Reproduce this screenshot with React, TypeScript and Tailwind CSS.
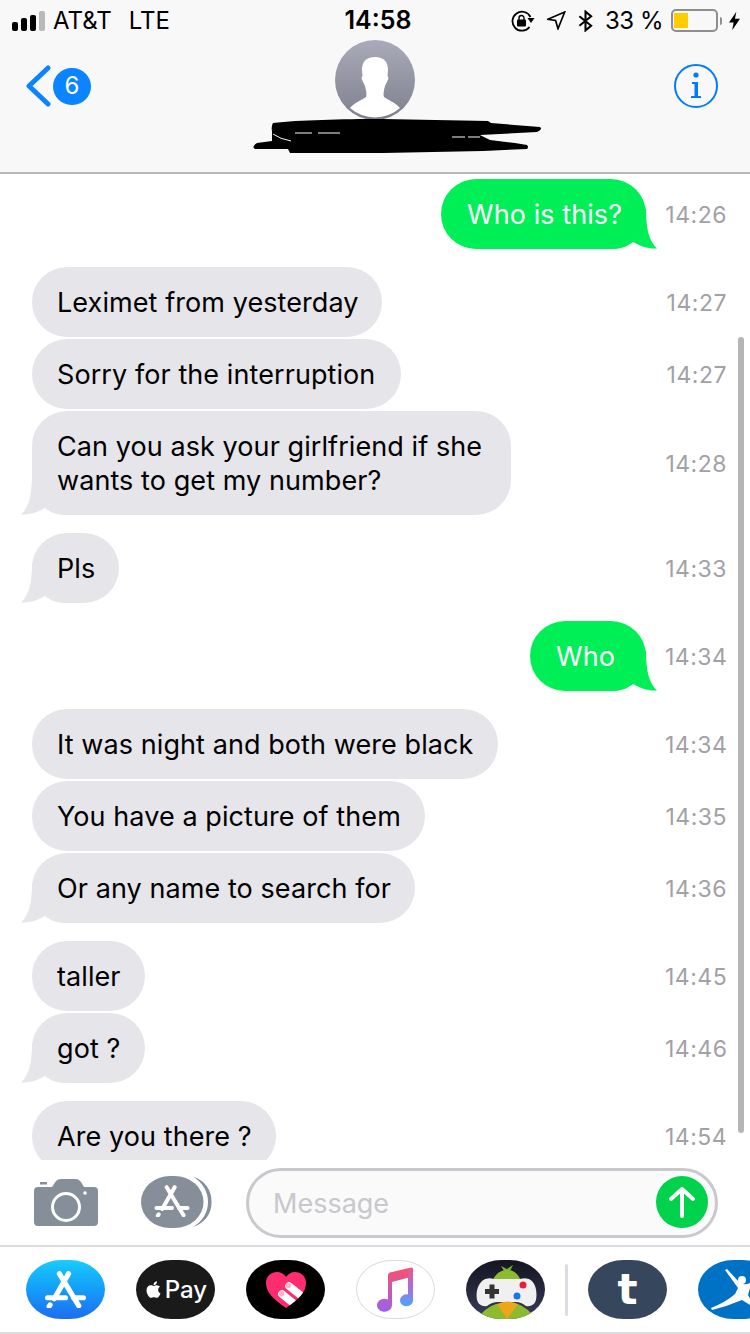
import type { ReactNode } from "react";
import { FaApple } from "react-icons/fa";

type Message = {
    text: string[];
    time: string;
    widthClass: string;
    outgoing?: boolean;
    tail?: boolean;
    gapBelow?: boolean;
};

const messages: Message[] = [
    { text: ["Who is this?"], time: "14:26", outgoing: true, tail: true, gapBelow: true, widthClass: "w-[205px]" },
    { text: ["Leximet from yesterday"], time: "14:27", widthClass: "w-[350px]" },
    { text: ["Sorry for the interruption"], time: "14:27", widthClass: "w-[369px]" },
    { text: ["Can you ask your girlfriend if she", "wants to get my number?"], time: "14:28", tail: true, gapBelow: true, widthClass: "w-[479px]" },
    { text: ["Pls"], time: "14:33", tail: true, gapBelow: true, widthClass: "w-[87px]" },
    { text: ["Who"], time: "14:34", outgoing: true, tail: true, gapBelow: true, widthClass: "w-[116px]" },
    { text: ["It was night and both were black"], time: "14:34", widthClass: "w-[466px]" },
    { text: ["You have a picture of them"], time: "14:35", widthClass: "w-[393px]" },
    { text: ["Or any name to search for"], time: "14:36", tail: true, gapBelow: true, widthClass: "w-[383px]" },
    { text: ["taller"], time: "14:45", widthClass: "w-[113px]" },
    { text: ["got ?"], time: "14:46", tail: true, gapBelow: true, widthClass: "w-[113px]" },
    { text: ["Are you there ?"], time: "14:54", widthClass: "w-[244px]" },
];

function AppStoreGlyph({ width, height, x, y, stroke = 4.5 }: { width: number; height: number; x?: number; y?: number; stroke?: number }) {
    return (
        <svg x={x} y={y} width={width} height={height} viewBox="0 0 40 36" fill="none" stroke="white" strokeWidth={stroke} strokeLinecap="round">
            <path d="M23 2.5 L9 27" />
            <path d="M5 33 L4 34.5" />
            <path d="M14 2.5 L33 34" />
            <path d="M2.5 26 H20 M28 26 H37.5" />
        </svg>
    );
}

function StatusBar() {
    return (
        <div className="flex h-[40px] items-center justify-between pl-[12px] pr-[10px] pt-[1px] text-[24px] text-black">
            <div className="flex w-[255px] items-center">
                <div className="flex items-end gap-[3px]">
                    <span className="h-[9px] w-[6px] rounded-[2px] bg-black" />
                    <span className="h-[13px] w-[6px] rounded-[2px] bg-black" />
                    <span className="h-[16px] w-[6px] rounded-[2px] bg-black" />
                    <span className="h-[20px] w-[6px] rounded-[2px] bg-[#b9b9b9]" />
                </div>
                <span className="ml-[8px]">AT&amp;T</span>
                <span className="ml-[17px]">LTE</span>
            </div>
            <span className="text-[25px] font-semibold">14:58</span>
            <div className="flex w-[251px] items-center justify-end">
                <svg width="24" height="22" viewBox="0 0 24 22" fill="none" stroke="black" strokeWidth="1.8">
                    <path d="M18.5 17 A9.5 9.5 0 1 1 19.5 7" />
                    <path d="M16.5 8 H23.5 L20 13 Z" fill="black" stroke="none" />
                    <rect x="6" y="9.5" width="9" height="7" rx="1" fill="black" stroke="none" />
                    <path d="M8 10 V8 a2.5 2.5 0 0 1 5 0 V10" strokeWidth="1.4" />
                </svg>
                <svg className="ml-[12px]" width="19" height="19" viewBox="0 0 19 19" fill="none" stroke="black" strokeWidth="1.7" strokeLinejoin="miter">
                    <path d="M17.7 1 L0.8 8.3 L8.6 9.5 L11 17.7 Z" />
                </svg>
                <svg className="ml-[12px]" width="15" height="22" viewBox="0 0 16 22" fill="none" stroke="black" strokeWidth="2.2">
                    <path d="M1.5 6 L14 16 L8 21 V1 L14 6 L1.5 16" />
                </svg>
                <span className="ml-[12px] tracking-[-0.5px]">33 %</span>
                <div className="ml-[8px] flex h-[23px] w-[47px] items-center rounded-[5px] border-2 border-[#8e8e8e] pl-[1px]">
                    <span className="h-[15px] w-[14px] bg-[#ffcc00]" />
                </div>
                <span className="ml-[2px] h-[8px] w-[2px] rounded-r-full bg-[#8e8e8e]" />
                <svg className="ml-[7px]" width="11" height="20" viewBox="0 0 12 20" fill="black">
                    <path d="M8 0 L0 11.5 H5 L3.5 20 L12 7.5 H6.5 Z" />
                </svg>
            </div>
        </div>
    );
}

function Avatar() {
    return (
        <div className="h-[80px] w-[80px] overflow-hidden rounded-full bg-linear-to-b from-[#a9acb8] to-[#7e818d]">
            <svg width="80" height="80" viewBox="0 0 80 80" fill="white">
                <path d="M40 17 C31 17 27 22 27 30 L27.5 36 L26.5 38 C27 41 29 43 30 46 C31 50 32 54 31 57 C27 60 20 62 15 68 A38 38 0 0 0 65 68 C60 62 53 60 49 57 C48 54 49 50 50 46 C51 43 53 41 53.5 38 L52.5 36 L53 30 C53 22 49 17 40 17 Z" />
            </svg>
        </div>
    );
}

function NavHeader() {
    return (
        <div className="relative flex h-[132px] items-start justify-between pl-[26px] pr-[32px]">
            <div className="mt-[25px] flex items-center">
                <svg width="25" height="42" viewBox="0 0 25 42" fill="none" stroke="#0a84ff" strokeWidth="5" strokeLinecap="round" strokeLinejoin="round">
                    <path d="M22 3 L3 21 L22 39" />
                </svg>
                <span className="ml-[2px] flex h-[37px] w-[38px] items-center justify-center rounded-full bg-[#0a84ff] text-[24px] text-white">6</span>
            </div>
            <div className="absolute left-[335px] top-0">
                <Avatar />
            </div>
            {/* scribbled out contact name */}
            <svg className="absolute left-[250px] top-[78px]" width="295" height="40" viewBox="250 118 295 40" fill="black">
                <path d="M273 123 C300 120 340 119 383 119 L488 121 L491 123 L540 127 Q543 129 537 132 L480 135 L490 140 L515 143 L527 145 Q529 147 527 149 L483 151 L383 153 L290 153 L288 149 L255 149 Q251 147 257 143 L272 141 L272 131 Q271 126 273 123 Z" />
                <path d="M273 134 Q280 139 291 141 M295 133 H312 M318 133 H340 M452 137 H465 M468 137 H480" fill="none" stroke="#f8f8f9" strokeWidth="1" />
            </svg>
            <svg className="mt-[24px]" width="44" height="44" viewBox="0 0 44 44" fill="none">
                <circle cx="22" cy="22" r="21" stroke="#007aff" strokeWidth="2" />
                <circle cx="22" cy="11" r="2.6" fill="#007aff" />
                <path d="M18 18 H24 V32 H27 V34 H17 V32 H20.5 V20 H18 Z" fill="#007aff" />
            </svg>
        </div>
    );
}

function Bubble({ message }: { message: Message }) {
    const color = message.outgoing ? "#00ef57" : "#e5e5ea";
    return (
        <div
            className={`relative rounded-[35px] pb-[17px] pt-[19px] text-[27px] leading-[34px] tracking-[0.08px] ${
                message.outgoing ? "bg-[#00ef57] px-[26px] text-white" : "bg-[#e5e5ea] px-[25px] text-black"
            } ${message.widthClass}`}
        >
            {message.tail && !message.outgoing && (
                <svg className="absolute bottom-0 left-[-11px]" width="44" height="40" viewBox="0 0 44 40" fill={color}>
                    <path d="M11 0 C11 20 8 32 0 39.5 C9 40 17 37 24 33 C28 36 34 40 44 40 L44 0 Z" />
                </svg>
            )}
            {message.tail && message.outgoing && (
                <svg className="absolute bottom-0 right-[-11px]" width="44" height="40" viewBox="0 0 44 40" fill={color}>
                    <path d="M33 0 C33 20 36 32 44 39.5 C35 40 27 37 20 33 C16 36 10 40 0 40 L0 0 Z" />
                </svg>
            )}
            {message.text.map((line) => (
                <div key={line} className="relative whitespace-nowrap">{line}</div>
            ))}
        </div>
    );
}

function MessageRow({ message }: { message: Message }) {
    return (
        <div
            className={
                message.gapBelow
                    ? "mb-[18px] flex items-center justify-between pl-[32px] pr-[23px]"
                    : "mb-[2px] flex items-center justify-between pl-[32px] pr-[23px]"
            }
        >
            {message.outgoing ? <span /> : <Bubble message={message} />}
            <div className="flex items-center">
                {message.outgoing && <Bubble message={message} />}
                <span className="ml-[19px] mt-[2px] w-[62px] whitespace-nowrap text-right text-[23px] tracking-[0.5px] text-[#a1a1a6]">{message.time}</span>
            </div>
        </div>
    );
}

function InputBar() {
    return (
        <div className="relative z-10 flex h-[87px] items-start border-b-2 border-[#dcdce0] bg-white pl-[34px] pt-[8px]">
            <svg className="mt-[10px]" width="64" height="48" viewBox="0 0 64 48">
                <path fillRule="evenodd" fill="#858e99" d="M4 9 H18 L22 3 Q24 1 27 1 H42 Q45 1 47 4 L50 9 H60 Q64 9 64 13 V44 Q64 48 60 48 H4 Q0 48 0 44 V13 Q0 9 4 9 Z M32 14 A15 15 0 1 0 32 44 A15 15 0 1 0 32 14 Z M32 17 A12 12 0 1 1 32 41 A12 12 0 1 1 32 17 Z" />
                <rect x="6" y="4" width="7" height="2.5" fill="#858e99" />
                <circle cx="51" cy="15" r="1.8" fill="white" />
            </svg>
            <svg className="ml-[43px] mt-[8px]" width="71" height="52" viewBox="0 0 71 52">
                <rect width="62.5" height="52" rx="29" ry="26" fill="#858e99" />
                <path d="M52 0.5 C64 4 71 15 70.5 26 C71 37 64 47 52 51 C62 45 67 36 67 26 C67 16 62 7 52 0.5 Z" fill="#858e99" />
                <AppStoreGlyph x={13} y={9} width={36} height={32} />
            </svg>
            <div className="ml-[34px] flex h-[70px] w-[472px] items-center justify-between rounded-[35px] border-[3px] border-[#c8c8cd] bg-[#fafafa] pl-[24px] pr-[7px]">
                <span className="pt-[2px] text-[27px] text-[#c7c7cc]">Message</span>
                <span className="mb-[2px] flex h-[52px] w-[52px] items-center justify-center rounded-full bg-[#00d24b]">
                    <svg width="28" height="32" viewBox="0 0 28 32" fill="none" stroke="white" strokeWidth="4" strokeLinecap="round" strokeLinejoin="round">
                        <path d="M14 30 V3 M3 13 L14 3 L25 13" />
                    </svg>
                </span>
            </div>
        </div>
    );
}

function AppPill({ className, children }: { className: string; children: ReactNode }) {
    return (
        <div className={`flex h-[59px] w-[79px] shrink-0 items-center justify-center overflow-hidden rounded-[36px/30px] ${className}`}>
            {children}
        </div>
    );
}

function AppTray() {
    return (
        <div className="flex h-[87px] items-center gap-[31px] overflow-hidden border-b-2 border-[#dcdce0] bg-white pl-[26px]">
            <AppPill className="bg-linear-to-b from-[#1ccbfd] to-[#1f6cf0]">
                <AppStoreGlyph width={41} height={37} stroke={5} />
            </AppPill>
            <AppPill className="bg-[#1a1a1a] text-white">
                <FaApple className="text-[19px]" />
                <span className="ml-[2px] text-[24px] font-medium leading-none">Pay</span>
            </AppPill>
            <AppPill className="bg-black">
                <svg width="42" height="38" viewBox="0 0 42 38">
                    <defs>
                        <clipPath id="heart">
                            <path d="M21 37 C8 28 1 21 1 12 C1 5 6 1 12 1 C16 1 19 3 21 6 C23 3 26 1 30 1 C36 1 41 5 41 12 C41 21 34 28 21 37 Z" />
                        </clipPath>
                    </defs>
                    <path fill="#ff2d6f" d="M21 37 C8 28 1 21 1 12 C1 5 6 1 12 1 C16 1 19 3 21 6 C23 3 26 1 30 1 C36 1 41 5 41 12 C41 21 34 28 21 37 Z" />
                    <g clipPath="url(#heart)" stroke="white" strokeWidth="7.5" strokeLinecap="round">
                        <path d="M17 23 L34 37" />
                        <path d="M24 15 L44 31" />
                    </g>
                    <circle cx="16.7" cy="22.7" r="2.6" fill="#ffb3c6" />
                    <circle cx="23.5" cy="14.5" r="2.6" fill="#ffb3c6" />
                </svg>
            </AppPill>
            <AppPill className="border border-[#dcdcdc] bg-white">
                <svg width="37" height="45" viewBox="0 0 37 45">
                    <defs>
                        <linearGradient id="noteLeft" x1="0.5" y1="0" x2="0.5" y2="1">
                            <stop offset="0" stopColor="#fb4f6b" />
                            <stop offset="1" stopColor="#9a62f0" />
                        </linearGradient>
                        <linearGradient id="noteRight" x1="0.5" y1="0" x2="0.5" y2="1">
                            <stop offset="0" stopColor="#f0567f" />
                            <stop offset="0.55" stopColor="#a86ee0" />
                            <stop offset="1" stopColor="#45aafb" />
                        </linearGradient>
                    </defs>
                    <path fill="url(#noteLeft)" d="M11 8 Q11 6 13 5.5 L31 1.2 V10.8 L15 15 V38 A7.5 6.5 0 1 1 11 32.5 Z" />
                    <path fill="url(#noteRight)" d="M31 1.2 L34 0.5 Q36 0 36 2 V33 A6.5 6 0 1 1 31 27.5 Z" />
                </svg>
            </AppPill>
            <AppPill className="bg-linear-to-b from-[#14151f] to-[#3a3d5a]">
                <svg width="79" height="59" viewBox="0 0 79 59">
                    <path d="M35 6 L41 9 L47 5 L44 11 L38 11 Z" fill="#7fae2a" />
                    <path d="M25 24 Q30 10 41 10 Q52 10 56 24 Z" fill="#8dbb2e" />
                    <path d="M12 59 Q18 48 30 44 H52 Q62 48 70 59 Z" fill="#8dbb2e" />
                    <path d="M16 21 Q20 17 28 19 H54 Q62 17 66 21 Q72 28 70 40 Q68 47 60 46 Q55 42 50 42 H32 Q26 42 21 46 Q13 47 11 40 Q9 28 16 21 Z" fill="#f0f0f0" />
                    <path d="M23.5 24.5 H28.5 V29 H33 V34 H28.5 V38.5 H23.5 V34 H19 V29 H23.5 Z" fill="#333" />
                    <circle cx="57" cy="25" r="3.5" fill="#e0213f" />
                    <circle cx="51" cy="36" r="3.5" fill="#1877e8" />
                    <path d="M31 44 Q41 39 52 44 L41 59 Z" fill="#eda51c" />
                </svg>
            </AppPill>
            <span className="-mx-[11px] h-[52px] w-[3px] shrink-0 rounded-full bg-[#dcdce6]" />
            <AppPill className="bg-[#36465d]">
                <span className="font-['DejaVu_Sans',sans-serif] text-[42px] font-bold leading-none text-white">t</span>
            </AppPill>
            <AppPill className="bg-[#0072c6]">
                <svg width="79" height="59" viewBox="0 0 79 59" fill="white">
                    <circle cx="44" cy="20" r="4" />
                    <path d="M27 10 L29 9 L41 22 Q45 26 52 23 L60 20 L52 28 L50 35 L54 42 L60 50 L44 40 Q30 46 14 50 L13 48 Q28 42 37 34 L40 28 Z" />
                </svg>
            </AppPill>
        </div>
    );
}

export default function App() {
    return (
        <div className="relative flex h-[1334px] w-[750px] flex-col overflow-hidden bg-white font-['Inter',sans-serif]">
            <div className="shrink-0 border-b-2 border-[#b8b8b8] bg-[#f8f8f9]">
                <StatusBar />
                <NavHeader />
            </div>
            <div className="relative min-h-0 flex-1 overflow-hidden pt-[5px]">
                {messages.map((message, index) => (
                    <MessageRow key={index} message={message} />
                ))}
            </div>
            <span className="absolute left-[738px] top-[337px] z-20 h-[796px] w-[6px] rounded-full bg-[#b5b5b5]" />
            <InputBar />
            <AppTray />
        </div>
    );
}
